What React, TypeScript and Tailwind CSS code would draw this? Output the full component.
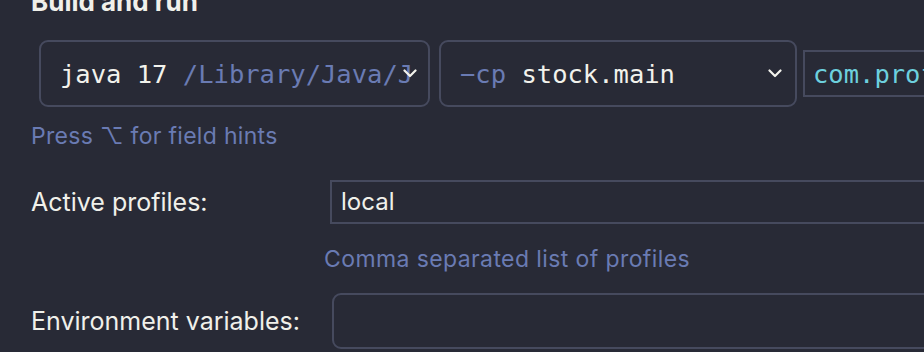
import React from "react";

const sans = { fontFamily: '"Inter", "Noto Sans", sans-serif' };
const mono = { fontFamily: '"DejaVu Sans Mono", "Liberation Mono", monospace' };

function Chevron() {
  return (
    <svg width="14" height="9" viewBox="0 0 14 9" fill="none">
      <path d="M1.5 1.5 L7 7 L12.5 1.5" stroke="#f2f2ec" strokeWidth="2.2" strokeLinecap="round" strokeLinejoin="round" />
    </svg>
  );
}

export default function App() {
  return (
    <div className="w-[924px] h-[352px] overflow-hidden bg-[#282a36] text-[#f0f0ea]" style={sans}>
      <div className="ml-[31px] mt-[-13px] text-[26px] leading-[30px] font-bold">Build and run</div>

      <div className="flex items-center mt-[23px] ml-[39px]">
        <div className="relative flex items-center w-[391px] h-[67px] shrink-0 rounded-[9px] border-2 border-[#464a5e] pl-[19px]">
          <div className="w-[353px] overflow-hidden whitespace-nowrap text-[25.5px] leading-[30px]" style={mono}>
            <span className="text-[#f2f2ec]">java 17 </span>
            <span className="text-[#6a7bb3]">/Library/Java/JavaVirtualMachines</span>
          </div>
          <div className="absolute right-[11px] top-[27px]">
            <Chevron />
          </div>
        </div>
        <div className="relative flex items-center ml-[9px] w-[358px] h-[67px] shrink-0 rounded-[9px] border-2 border-[#464a5e] pl-[19px]">
          <div className="whitespace-nowrap text-[25.5px] leading-[30px]" style={mono}>
            <span className="text-[#6a7bb3]">−cp </span>
            <span className="text-[#f2f2ec]">stock.main</span>
          </div>
          <div className="absolute right-[13px] top-[27px]">
            <Chevron />
          </div>
        </div>
        <div className="flex items-center ml-[6px] h-[47px] w-[200px] shrink-0 border-2 border-[#464a5e] pl-[8px]">
          <div className="whitespace-nowrap text-[25.5px] leading-[30px] text-[#6dd0de]" style={mono}>
            com.profiler.Main
          </div>
        </div>
      </div>

      <div className="ml-[31px] mt-[15px] text-[23px] leading-[28px] tracking-[0.3px] text-[#6a7bb3]">Press ⌥ for field hints</div>

      <div className="flex items-center mt-[30px]">
        <div className="ml-[31px] w-[299px] text-[25px] leading-[30px]">Active profiles:</div>
        <div className="flex items-center flex-1 h-[44px] border-2 border-r-0 border-[#464a5e] pl-[9px] text-[24px] leading-[28px]">
          local
        </div>
      </div>

      <div className="ml-[324px] mt-[21px] text-[23px] leading-[28px] tracking-[0.4px] text-[#6a7bb3]">Comma separated list of profiles</div>

      <div className="flex items-center mt-[20px]">
        <div className="ml-[31px] w-[301px] text-[25px] leading-[30px]">Environment variables:</div>
        <div className="flex-1 h-[56px] mr-[-20px] rounded-[9px] border-2 border-[#464a5e]" />
      </div>
    </div>
  );
}
